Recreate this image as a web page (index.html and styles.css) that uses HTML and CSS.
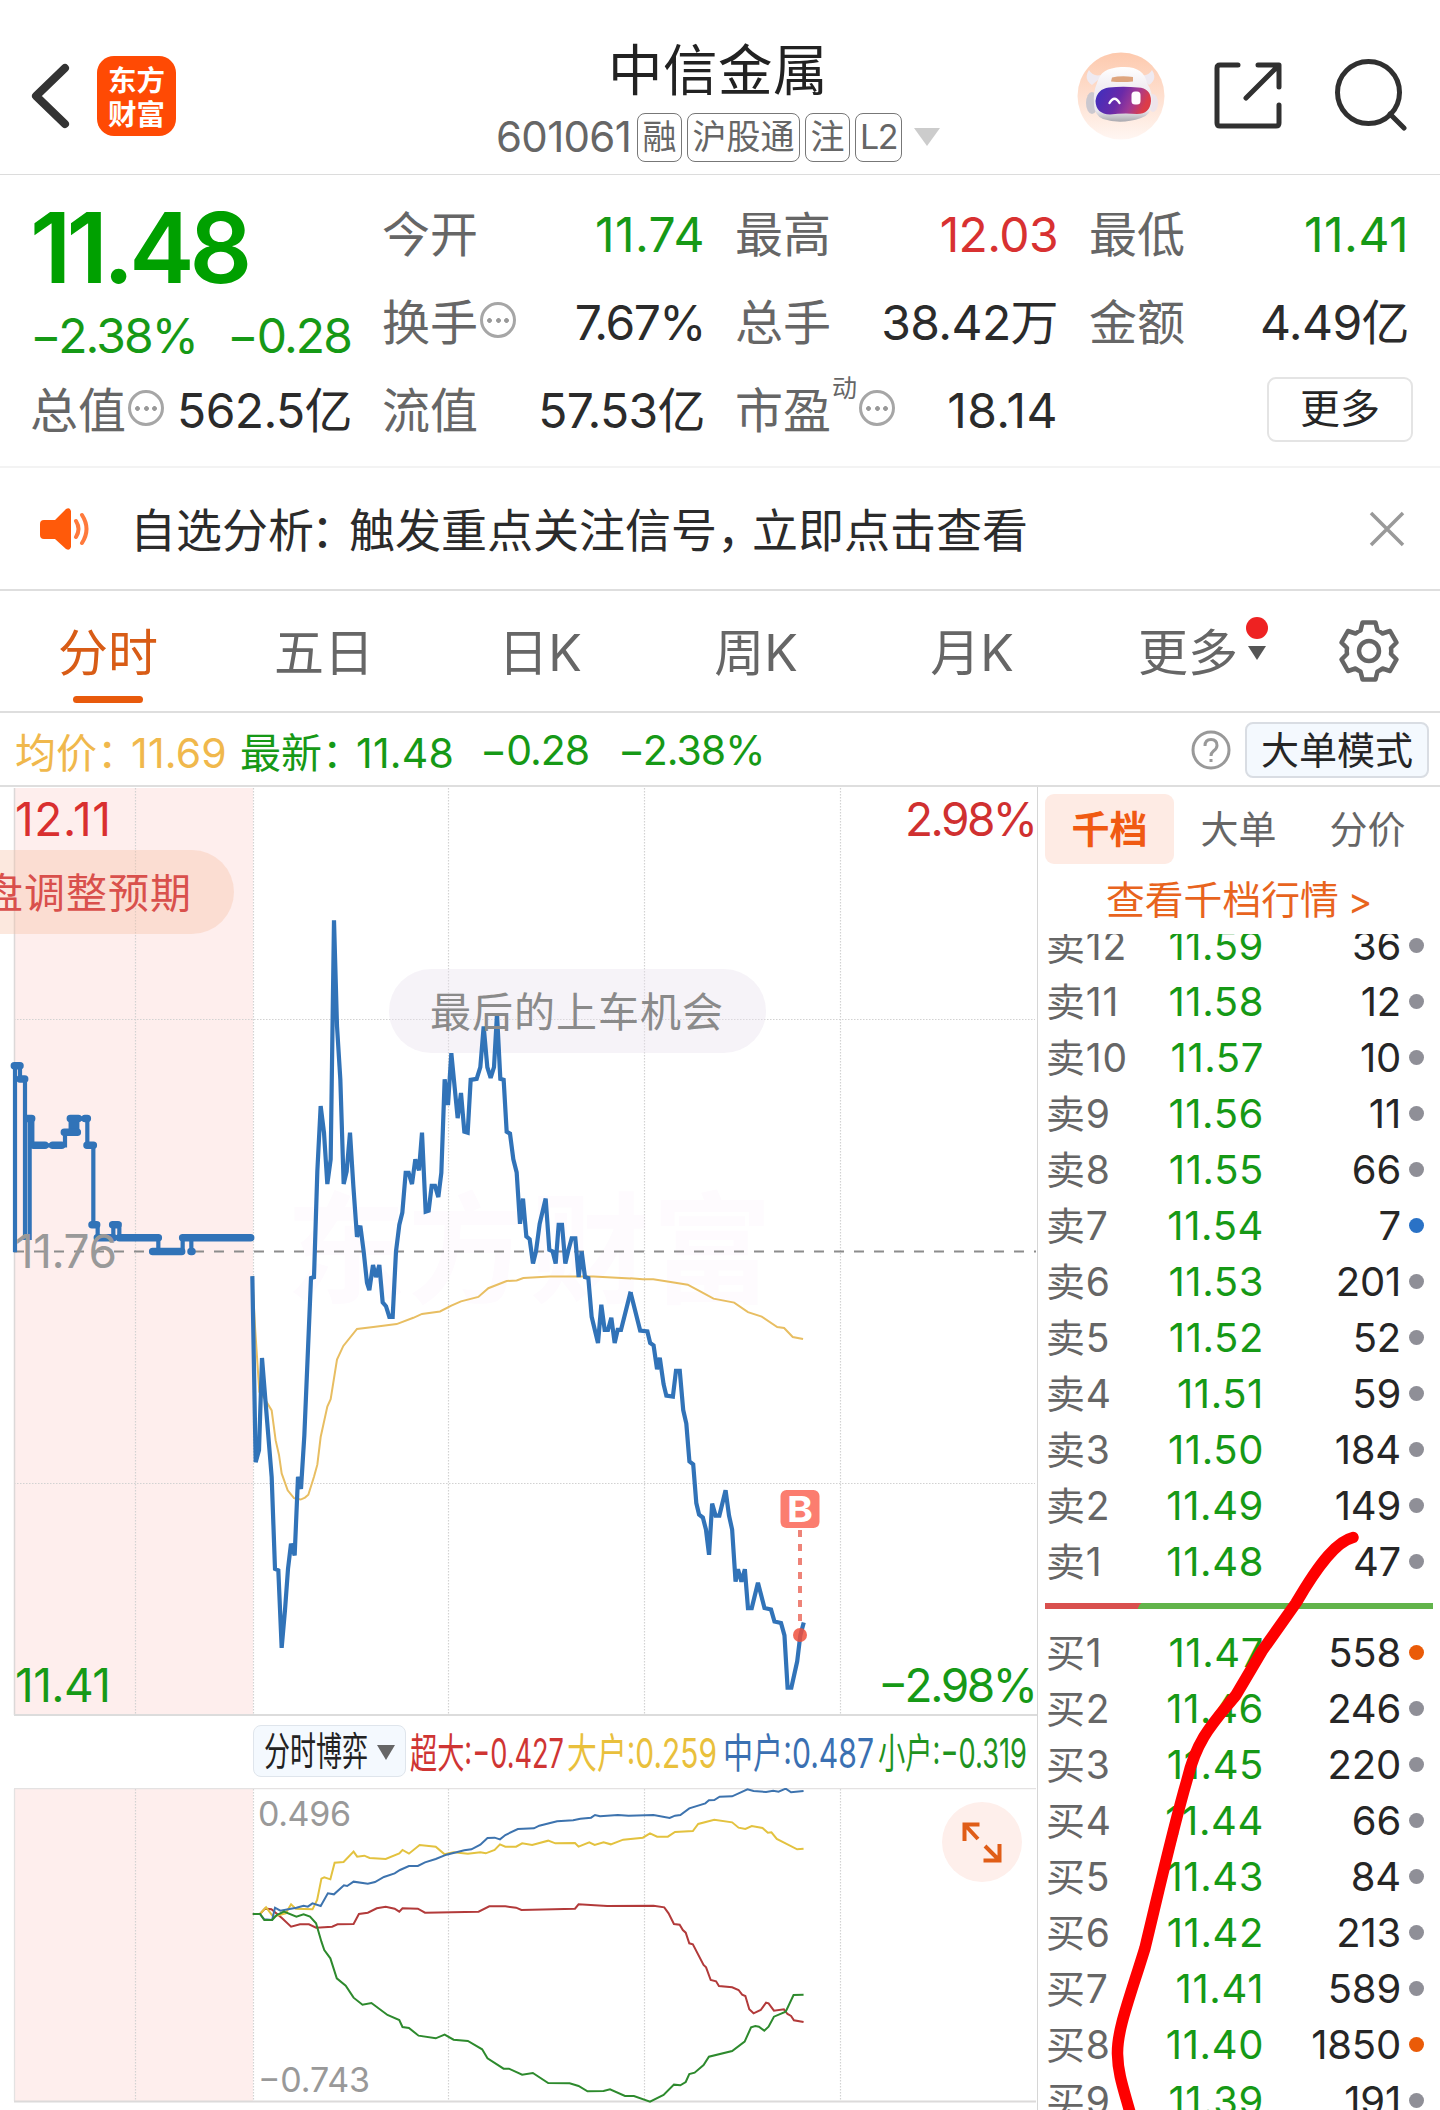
FILE: index.html
```html
<!DOCTYPE html>
<html lang="zh-CN">
<head>
<meta charset="utf-8">
<title>中信金属 601061</title>
<link rel="stylesheet" href="styles.css">
</head>
<body>
<div class="app">

<header class="topbar">
  <div class="topbar-left">
    <svg class="back" width="40" height="68" viewBox="0 0 40 68"><path d="M35 6 6 34 35 62" /></svg>
    <div class="logo"><span>东方</span><span>财富</span></div>
  </div>
  <div class="title">
    <h1>中信金属</h1>
    <div class="code-row">
      <span class="code">601061</span>
      <span class="tag">融</span><span class="tag">沪股通</span><span class="tag">注</span><span class="tag l2">L2</span>
      <svg class="drop" width="26" height="18" viewBox="0 0 26 18"><path d="M0 0h26L13 18z"/></svg>
    </div>
  </div>
  <div class="topbar-right">
    <svg width="88" height="88" viewBox="0 0 88 88">
      <defs>
        <linearGradient id="halo" x1="0" y1="0" x2="0" y2="1"><stop offset="0" stop-color="#fdc9ad"/><stop offset="1" stop-color="#fff6f2"/></linearGradient>
        <linearGradient id="visor" x1="0" y1="0" x2="1" y2="0.25"><stop offset="0" stop-color="#3b2fc0"/><stop offset=".5" stop-color="#6a2aa8"/><stop offset=".75" stop-color="#a03a96"/><stop offset="1" stop-color="#dc3c48"/></linearGradient>
        <linearGradient id="shell" x1="0" y1="0" x2="0" y2="1"><stop offset="0" stop-color="#fff"/><stop offset=".35" stop-color="#f2eef3"/><stop offset=".8" stop-color="#eae8ee"/><stop offset="1" stop-color="#a9a8ae"/></linearGradient>
      </defs>
      <circle cx="44" cy="44" r="43.500" fill="url(#halo)"/>
      <path d="M12 18q-6 9 3 15l6-5 3-5q-8 2-12-5zM75 18q6 9-3 15l-6-5-3-5q8 2 12-5z" fill="#efeaf1"/>
      <ellipse cx="15" cy="51" rx="6" ry="11" fill="#cbc8cf"/><ellipse cx="76" cy="51" rx="5" ry="9" fill="#eee4ea"/>
      <path d="M44 15C60 14 68 20 70 31Q76 40 75 52 74 63 64 66 44 73 26 67 17 63 17 52 16 40 20 31C23 20 30 16 44 15z" fill="url(#shell)"/>
      <path d="M35 25.500Q44 23.500 56 25v4.500q-11 1-22 0z" fill="#dea57e"/>
      <path d="M32 35.500Q46 34 61 35.500 74 36 74 49 73 62 60 62 46 61 33 62.500 19 62 18.500 49 20 37 32 35.500z" fill="url(#visor)"/>
      <path d="M32.500 51q5-8.500 10 0" fill="none" stroke="#fff" stroke-width="2.400" stroke-linecap="round"/>
      <rect x="54.500" y="39.500" width="9" height="13" rx="3.500" fill="#fff"/>
    </svg>
    <svg class="line-icon" width="72" height="72" viewBox="0 0 72 72"><path d="M26 5H8Q5 5 5 8V63Q5 66 8 66H64Q67 66 67 63V45M46 5H67V27M65 7 34 38"/></svg>
    <svg class="line-icon" width="76" height="76" viewBox="0 0 76 76"><circle cx="37.500" cy="34.500" r="31"/><path d="M59 56 73 70"/></svg>
  </div>
</header>

<section class="quote">
  <div class="q-main">
    <div class="price">11.48</div>
    <div class="change"><span>−2.38%</span><span>−0.28</span></div>
  </div>
  <div class="cell a"><label>今开</label><b class="g w">11.74</b></div>
  <div class="cell b"><label>最高</label><b class="r">12.03</b></div>
  <div class="cell c"><label>最低</label><b class="g w">11.41</b></div>
  <div class="cell a"><label>换手</label><i class="info"></i><b class="n">7.67%</b></div>
  <div class="cell b"><label>总手</label><b>38.42万</b></div>
  <div class="cell c"><label>金额</label><b>4.49亿</b></div>
  <div class="cell m"><label>总值</label><i class="info"></i><b>562.5亿</b></div>
  <div class="cell a"><label>流值</label><b>57.53亿</b></div>
  <div class="cell b"><label>市盈</label><sup>动</sup><i class="info"></i><b class="w">18.14</b></div>
  <div class="cell c end"><button class="more">更多</button></div>
</section>

<section class="notice">
  <svg width="52" height="44" viewBox="0 0 52 44"><path d="M4 13h11L26 2q4-2 5 2v36q-1 4-5 2L15 32H4q-4 0-4-4V17q0-4 4-4z" fill="#ff5a0a"/><path d="M36 14q5 8 0 16M42 8q9 14 0 28" fill="none" stroke="#ff7a3c" stroke-width="4" stroke-linecap="round"/></svg>
  <p>自选分析<span class="punct colon">：</span>触发重点关注信号<span class="punct">，</span>立即点击查看</p>
  <svg class="close" width="36" height="36" viewBox="0 0 36 36"><path d="M2 2 34 34M34 2 2 34"/></svg>
</section>

<nav class="tabs">
  <a class="on">分时</a><a>五日</a><a>日K</a><a>周K</a><a>月K</a>
  <a class="tab-more">更多<span class="badge"><i></i><svg width="18" height="14" viewBox="0 0 18 14"><path d="M0 0h18L9 14z"/></svg></span></a>
  <svg class="gear" width="62" height="62" viewBox="-31 -31 62 62"><path d="M-6.500 -28.500H6.500L8.500 -20.500Q11 -19.500 13.500 -17.500L21 -20 27.500 -8.500 22 -3Q22.500 0 22 3L27.500 8.500 21 20 13.500 17.500Q11 19.500 8.500 20.500L6.500 28.500H-6.500L-8.500 20.500Q-11 19.500 -13.500 17.500L-21 20 -27.500 8.500 -22 3Q-22.500 0 -22 -3L-27.500 -8.500 -21 -20 -13.500 -17.500Q-11 -19.500 -8.500 -20.500Z"/><circle r="10"/></svg>
</nav>

<section class="avg">
  <span class="y avg-item">均价：<em>11.69</em></span>
  <span class="g avg-item">最新：<em>11.48</em></span>
  <span class="g n1">−0.28</span><span class="g n2">−2.38%</span>
  <svg class="help" width="40" height="40" viewBox="0 0 40 40"><circle cx="20" cy="20" r="18"/><path d="M14 16q0-6.500 6-6.500t6 6q0 3-3.500 5.500Q20 23 20 26M20 29v3"/></svg>
  <button class="mode">大单模式</button>
</section>

<main class="body">
<div class="charts">
  <svg class="chart" width="1037" height="929" viewBox="0 787 1037 929">
    <rect x="14" y="788" width="239" height="927" fill="#feeeed"/>
    <text x="286" y="1294" class="mark" textLength="486">东方财富</text>
    <g class="grid"><path d="M135.500 788V1715M253.500 788V1715M448.500 788V1715M644.500 788V1715M840.500 788V1715M14 1019.500H1035M14 1483.500H1035"/></g>
    <path d="M14.500 788V1715" stroke="#dcd8d8" stroke-width="1.500"/>
    <path d="M14 1715H1037" stroke="#dcdcdc" stroke-width="2"/>
    <rect x="-60" y="850" width="294" height="84" rx="42" fill="#f8bfa4" fill-opacity=".36"/>
    <rect x="389" y="969" width="377" height="84" rx="42" fill="#e8e0ee" fill-opacity=".4"/>
    <path d="M14 1251.500H1036" stroke="#8c8c8c" stroke-width="1.800" stroke-dasharray="10 10"/>
    <g transform="translate(240 900) scale(.33333 .48469)" class="avg-line">
      <path d="M37 776 45 880 58 1015 75 1030 95 1053 107 1115 117 1145 125 1183 143 1218 162 1234 182 1237 195 1233 205 1227 222 1190 232 1165 242 1108 262 1045 272 1030 291 948 310 920 351 885 400 881 470 875 520 862 546 854 600 849 634 837 663 828 715 819 745 801 800 786 830 785 850 780 930 777 1060 777 1173 781"/>
    </g>
    <g transform="translate(500 940) scale(.34439 .49745)" class="avg-line">
      <path d="M379 680 415 682 445 682 500 688 545 693 580 706 620 721 680 729 720 748 760 757 805 778 825 780 850 798 880 802"/>
    </g>
    <g transform="translate(240 900) scale(.33333 .48469)" class="price-line">
      <path d="M37 776 47 1160 57 1135 66 945 76 1030 95 1190 105 1380 115 1383 125 1543 135 1465 144 1380 153 1328 164 1352 174 1190 183 1215 193 1105 213 780 222 778 232 560 242 425 252 480 262 586 272 535 282 42 291 260 301 370 311 586 320 560 330 480 340 590 351 695 361 672 371 725 381 790 388 805 399 753 408 778 418 753 428 830 438 838 448 860 458 860 468 725 478 670 487 645 497 563 506 563 516 586 526 535 537 558 546 480 557 643 566 641 575 590 585 590 595 613 604 563 614 370 624 423 634 316 653 450 663 398 673 478 683 480 692 371 710 369 721 345 731 261 742 345 752 367 762 345 771 235 781 369 791 371 800 478 810 482 820 535 830 562 840 668 849 616 859 694 869 700 879 750 888 725 899 668 917 616 928 722 938 725 947 750 956 670 966 670 976 750 985 723 995 698 1006 698 1016 778 1025 725 1035 778 1045 780 1055 860 1074 914 1084 835 1094 887 1104 887 1114 862 1124 914 1133 887 1143 887 1172 808"/>
    </g>
    <g transform="translate(500 940) scale(.34439 .49745)" class="price-line">
      <path d="M379 708 407 785 428 787 436 810 446 815 456 863 464 840 475 893 483 916 502 918 511 866 522 866 532 945 541 972 550 1048 561 1054 570 1132 578 1155 589 1161 598 1185 607 1236 616 1133 626 1157 637 1157 655 1106 665 1157 674 1185 684 1290 691 1265 701 1290 711 1265 720 1343 731 1343 749 1292 768 1343 787 1346 797 1370 816 1373 826 1398 835 1503 846 1503 863 1450 872 1398 882 1372"/>
    </g>
    <g transform="translate(0 780) scale(.33333 .35714)" class="price-line">
      <path d="M45 1322V800H60V837H75V1282H89V948H97V1023H195V986H212V948H220V986H232V948H262V1023H280V1245H293V1282H340V1245H358V1282H475V1320H548V1282H574V1320 1282H752"/>
      <path class="auction" d="M43 800H60M60 837H74M82 948H95M100 1023H135M158 1023H185M193 986H232M211 948H235M255 948H262M261 1023H280M276 1245H290M292 1282H340M338 1245H354M358 1282H475M458 1320H545M548 1282H752M573 1320H576"/>
    </g>
    <path d="M800 1530V1624" stroke="#ee8378" stroke-width="4" stroke-dasharray="7 7"/>
    <circle cx="800" cy="1635" r="7" fill="#f0503c" fill-opacity=".85"/>
    <rect x="780.500" y="1490" width="39" height="38" rx="6" fill="#fb7d6f"/>
    <text x="787" y="1522" class="buy" textLength="26" lengthAdjust="spacingAndGlyphs">B</text>
    <g class="axis">
      <text x="15" y="836" fill="#d92f2f" textLength="96" >12.11</text>
      <text x="905" y="836" fill="#d03030" textLength="133">2.98%</text>
      <text x="15" y="1268" fill="#999" textLength="102">11.76</text>
      <text x="15" y="1702" fill="#169916" textLength="96">11.41</text>
      <text x="878" y="1702" fill="#169916" textLength="160">−2.98%</text>
    </g>
    <text x="-18" y="908" class="pill-text" fill="#d9504c" textLength="209">盘调整预期</text>
    <text x="430" y="1027" class="pill-text" fill="#8a8a8a" textLength="293">最后的上车机会</text>
  </svg>

  <div class="legend">
    <button class="metric"><svg width="150" height="50" viewBox="0 0 150 50"><text x="10" y="39" textLength="104" lengthAdjust="spacingAndGlyphs">分时博弈</text><path d="M123 19h18l-9 15z" fill="#666"/></svg></button>
    <svg class="legend-values" width="622" height="52" viewBox="410 1725 622 52">
      <text x="410" y="1768" fill="#cf3533" textLength="154" lengthAdjust="spacingAndGlyphs">超大:−0.427</text>
      <text x="567" y="1768" fill="#e9c03c" textLength="150" lengthAdjust="spacingAndGlyphs">大户:0.259</text>
      <text x="723" y="1768" fill="#3a70b2" textLength="151" lengthAdjust="spacingAndGlyphs">中户:0.487</text>
      <text x="878" y="1768" fill="#1f931f" textLength="149" lengthAdjust="spacingAndGlyphs">小户:−0.319</text>
    </svg>
  </div>

  <svg class="chart" width="1037" height="323" viewBox="0 1788 1037 323">
    <rect x="14" y="1789" width="239" height="312" fill="#feeeed"/>
    <g class="grid"><path d="M135.500 1789V2101M253.500 1789V2101M448.500 1789V2101M644.500 1789V2101M840.500 1789V2101"/></g>
    <path d="M14 1788.500H1036M14.500 1789V2101" stroke="#e4e2e2" stroke-width="1.300"/>
    <path d="M14 2101.500H1036" stroke="#dcdada" stroke-width="1.800"/>
    <g transform="translate(0 1640) scale(.35714 .33333)" class="flow">
      <path stroke="#b23a3a" d="M708 822 728 822 742 806 760 808 790 835 815 860 840 853 865 853 885 863 930 860 945 853 990 852 1005 822 1030 818 1055 805 1080 800 1105 806 1118 815 1127 805 1170 806 1190 818 1340 815 1370 799 1415 799 1445 803 1460 810 1610 806 1620 793 1700 798 1830 797 1860 802 1872 820 1887 852 1903 854 1912 870 1920 878 1930 910 1940 913 1970 975 1977 982 1990 1020 2005 1024 2013 1038 2050 1042 2068 1050 2078 1064 2087 1068 2098 1108 2110 1120 2130 1110 2145 1088 2152 1090 2167 1112 2195 1108 2205 1122 2215 1128 2223 1141 2250 1146"/>
      <path stroke="#e3c23f" d="M708 822 728 822 745 802 765 830 800 820 815 793 828 806 875 808 888 780 900 716 908 712 925 718 937 668 962 666 990 635 1000 650 1020 647 1035 654 1080 657 1118 640 1127 630 1145 641 1175 615 1220 620 1245 643 1270 637 1310 641 1345 637 1360 640 1385 630 1400 613 1415 620 1445 620 1462 610 1490 615 1535 602 1555 610 1610 609 1620 620 1650 607 1665 615 1690 607 1710 613 1745 599 1800 593 1820 580 1840 590 1870 590 1890 576 1940 573 1955 552 2000 539 2050 547 2068 563 2087 567 2105 558 2135 564 2150 578 2160 577 2175 597 2205 613 2232 628 2250 626"/>
      <path stroke="#3d73ae" d="M708 822 728 822 740 838 762 840 770 803 785 812 830 803 850 797 862 800 875 790 898 798 918 760 935 763 963 736 972 738 990 725 1030 731 1050 726 1075 711 1105 700 1120 690 1145 678 1170 678 1190 667 1220 657 1250 644 1300 631 1320 628 1345 614 1365 594 1385 593 1400 598 1415 585 1450 567 1495 565 1510 557 1560 544 1605 541 1625 536 1655 533 1666 525 1680 529 1730 525 1760 527 1830 525 1875 534 1890 527 1905 525 1930 505 1975 490 1985 481 2000 480 2015 470 2050 469 2093 448 2110 453 2145 456 2165 452 2180 455 2200 446 2215 457 2250 453"/>
      <path stroke="#2d8a2d" d="M708 822 728 822 740 840 762 840 775 825 795 815 830 830 850 823 868 830 885 850 900 905 908 930 925 955 943 1015 968 1037 990 1073 1015 1094 1040 1089 1085 1125 1118 1140 1127 1161 1145 1164 1172 1187 1220 1195 1245 1184 1270 1199 1310 1203 1350 1228 1365 1255 1410 1286 1425 1286 1462 1304 1492 1299 1535 1329 1595 1330 1620 1338 1645 1354 1690 1353 1708 1348 1750 1368 1775 1368 1820 1385 1858 1365 1887 1334 1905 1336 1920 1326 1930 1302 1945 1298 1970 1275 1985 1250 2050 1233 2085 1205 2103 1162 2115 1158 2125 1160 2140 1172 2152 1160 2167 1130 2200 1115 2222 1065 2250 1064"/>
    </g>
    <g class="sub-axis"><text x="258" y="1826" textLength="93">0.496</text><text x="258" y="2092" textLength="112">−0.743</text></g>
    <circle cx="982" cy="1842" r="40" fill="#feefeb"/>
    <path d="M964.500 1841V1824.500H979.500M965 1825 978 1839M999.500 1844V1860.500H983.500M999 1860 985 1846" fill="none" stroke="#e05d17" stroke-width="4"/>
  </svg>
</div>

<aside class="book">
  <div class="book-tabs"><a class="on">千档</a><a>大单</a><a>分价</a></div>
  <div class="book-link">查看千档行情<span>&gt;</span></div>
  <div class="asks">
    <div class="row"><span>卖12</span><b>11.59</b><em>36</em><i></i></div>
    <div class="row"><span>卖11</span><b>11.58</b><em>12</em><i></i></div>
    <div class="row"><span>卖10</span><b>11.57</b><em>10</em><i></i></div>
    <div class="row"><span>卖9</span><b>11.56</b><em>11</em><i></i></div>
    <div class="row"><span>卖8</span><b>11.55</b><em>66</em><i></i></div>
    <div class="row"><span>卖7</span><b>11.54</b><em>7</em><i class="blue"></i></div>
    <div class="row"><span>卖6</span><b>11.53</b><em>201</em><i></i></div>
    <div class="row"><span>卖5</span><b>11.52</b><em>52</em><i></i></div>
    <div class="row"><span>卖4</span><b>11.51</b><em>59</em><i></i></div>
    <div class="row"><span>卖3</span><b>11.50</b><em>184</em><i></i></div>
    <div class="row"><span>卖2</span><b>11.49</b><em>149</em><i></i></div>
    <div class="row"><span>卖1</span><b>11.48</b><em>47</em><i></i></div>
  </div>
  <div class="ratio"></div>
  <div class="bids">
    <div class="row"><span>买1</span><b>11.47</b><em>558</em><i class="orange"></i></div>
    <div class="row"><span>买2</span><b>11.46</b><em>246</em><i></i></div>
    <div class="row"><span>买3</span><b>11.45</b><em>220</em><i></i></div>
    <div class="row"><span>买4</span><b>11.44</b><em>66</em><i></i></div>
    <div class="row"><span>买5</span><b>11.43</b><em>84</em><i></i></div>
    <div class="row"><span>买6</span><b>11.42</b><em>213</em><i></i></div>
    <div class="row"><span>买7</span><b>11.41</b><em>589</em><i></i></div>
    <div class="row"><span>买8</span><b>11.40</b><em>1850</em><i class="orange"></i></div>
    <div class="row"><span>买9</span><b>11.39</b><em>191</em><i></i></div>
  </div>
  <svg class="scribble" width="402" height="600" viewBox="1038 1510 402 600"><path d="M1354 1537.500C1339 1541 1322 1560 1297 1603L1263 1651 1237 1695C1215 1722 1198 1738 1188 1780 1174 1828 1160 1890 1146 1948 1130 2000 1118 2030 1118.500 2054 1119 2075 1125 2090 1132 2116"/></svg>
</aside>
</main>
</div>
</body>
</html>
```
FILE: styles.css
```css
* { box-sizing: border-box; }
body { margin: 0; background: #fff; color: #2b2b2b; font-family: Inter, "Noto Sans CJK SC", sans-serif; }
.app { width: 1440px; height: 2110px; overflow: hidden; }
svg { display: block; flex: none; }
b, i, em { font-weight: 400; font-style: normal; }
button { font-family: inherit; padding: 0; color: #262626; }
.g { color: #169916; }
.r { color: #d83131; }
.y { color: #f0b84c; }

.topbar { height: 175px; display: grid; grid-template-columns: 370px 696px 1fr; border-bottom: 1.500px solid #dcdcdc; }
.topbar-left { display: flex; align-items: center; gap: 27px; padding: 18px 0 0 30px; }
.back path { fill: none; stroke: #333; stroke-width: 8; stroke-linecap: round; stroke-linejoin: round; }
.logo { width: 79px; height: 80px; border-radius: 17px; background: #ff4a04; color: #fff; font: 700 28.500px/34px "Noto Sans CJK SC", sans-serif; display: flex; flex-direction: column; align-items: center; justify-content: center; }
.title { display: flex; flex-direction: column; align-items: center; padding-top: 37px; }
.title h1 { margin: 0; font-size: 54.500px; line-height: 66px; font-weight: 400; letter-spacing: .5px; color: #222; }
.code-row { display: flex; align-items: center; gap: 5px; margin-top: 9px; }
.code { font-size: 42px; line-height: 50px; letter-spacing: -.700px; color: #666; margin-right: 1px; }
.tag { height: 49px; border: 1.500px solid #777; border-radius: 8px; padding: 0 4.500px; font-size: 34px; line-height: 46px; color: #666; }
.tag.l2 { letter-spacing: -1.500px; padding: 0 4px; }
.drop { margin-left: 7px; fill: #ccc; }
.topbar-right { display: flex; align-items: center; padding: 18px 0 0 11px; gap: 47px; }
.line-icon { fill: none; stroke: #303030; stroke-width: 5; stroke-linecap: round; stroke-linejoin: round; }

.quote { height: 293px; padding: 16px 0 0 30px; display: grid; grid-template-columns: 352px 353px 354px 351px; grid-template-rows: 88px 88px 88px; border-bottom: 2px solid #f3f3f3; }
.q-main { grid-row: 1 / 3; color: #00a000; }
.price { font-size: 98px; line-height: 98px; font-weight: 600; letter-spacing: -5px; margin-top: 8px; height: 112px; }
.change { display: flex; justify-content: space-between; width: 321px; font-size: 48px; line-height: 50px; letter-spacing: -1.900px; color: #169916; }
.cell { display: flex; align-items: center; font-size: 48px; height: 88px; }
.cell label { color: #666; line-height: 60px; }
.cell b { margin-left: auto; letter-spacing: -.600px; line-height: 60px; white-space: nowrap; }
.cell b.w { letter-spacing: .500px; }
.cell b.n { letter-spacing: -1.500px; }
.cell.a, .cell.b, .cell.c, .cell.m { padding-right: 30px; }
.cell.b b, .cell.c b { margin-right: 1px; }
.cell.end { justify-content: flex-end; padding-right: 27px; }
.cell.end .more { margin-top: -4px; }
.cell sup { font-size: 25px; line-height: 30px; color: #666; align-self: flex-start; margin: 6px 0 0 1px; }
.info { flex: none; width: 36px; height: 36px; margin: -6px 0 0 2px; border: 3px solid #a6a6a6; border-radius: 50%; background: radial-gradient(circle, #999 2px, transparent 2.800px) center / 9px 9px no-repeat, radial-gradient(circle, #999 2px, transparent 2.800px) 2px center / 9px 9px no-repeat, radial-gradient(circle, #999 2px, transparent 2.800px) 19px center / 9px 9px no-repeat; }
.more { width: 146px; height: 65px; border: 2px solid #e4e4e4; border-radius: 9px; background: #fff; font-size: 40px; line-height: 58px; }

.notice { height: 123px; padding: 0 35px 0 40px; display: flex; align-items: center; border-bottom: 2px solid #dedede; }
.notice p { margin: 2px auto 0 38px; font-size: 46px; line-height: 60px; color: #2b2b2b; }
.punct { letter-spacing: -11px; }
.punct.colon { position: relative; left: -3px; }
.close path { fill: none; stroke: #999; stroke-width: 3.500; }

.tabs { height: 122px; display: flex; align-items: center; border-bottom: 2px solid #dedede; }
.tabs a { width: 216px; height: 120px; font-size: 50px; line-height: 125px; text-align: center; color: #666; }
.tabs a.on { color: #d85c16; display: flex; flex-direction: column; align-items: center; }
.tabs a.on::after { content: ""; width: 70px; height: 7px; border-radius: 4px; background: #e85a0c; margin-top: -20px; flex: none; }
.tab-more { position: relative; }
.badge { position: absolute; left: 166px; top: 26px; line-height: 0; }
.badge i { display: block; width: 22px; height: 22px; border-radius: 50%; background: #ee2222; }
.badge svg { margin: 7px 0 0 2px; fill: #555; }
.gear { margin-left: 42px; fill: none; stroke: #666; stroke-width: 4.500; stroke-linejoin: round; }

.avg { height: 74px; display: flex; align-items: center; padding: 1px 11px 0 15px; font-size: 41px; border-bottom: 2px solid #dedede; white-space: nowrap; }
.avg-item { width: 225px; }
.avg em { letter-spacing: .200px; margin-left: -7px; }
.n1, .n2 { letter-spacing: -1px; }
.n1 { width: 138px; margin-left: 15px; }
.help { margin-left: auto; fill: none; stroke: #999; stroke-width: 3; }
.mode { width: 184px; height: 56px; margin-left: 14px; border: 2px solid #d9dde3; border-radius: 8px; background: #f4f9fe; font-size: 38px; line-height: 50px; }

.body { display: flex; height: 1323px; }
.charts { width: 1037px; flex: none; }
.chart { overflow: hidden; }
.grid path { fill: none; stroke: #d2d2d2; stroke-width: 1.200; stroke-dasharray: 1.500 1.500; }
.mark { font: 700 120px "Noto Sans CJK SC", sans-serif; fill: #fefbfe; }
.price-line path, .avg-line path, .flow path { fill: none; vector-effect: non-scaling-stroke; stroke-linejoin: miter; stroke-miterlimit: 2; }
.price-line path { stroke: #3173b8; stroke-width: 4.200; }
.price-line path.auction { stroke-width: 7.500; stroke-linecap: round; }
.avg-line path { stroke: #e8be62; stroke-width: 2; }
.flow path { stroke-width: 2; }
.axis text { font-size: 46px; }
.sub-axis text { font-size: 34px; fill: #999; }
.pill-text { font-size: 41px; }
.buy { font-size: 36px; font-weight: 700; fill: #fff; }
.legend { height: 72px; display: flex; align-items: center; padding: 0 0 2px 253px; }
.metric { width: 153px; height: 52px; border: 1.500px solid #dfe5ec; border-radius: 8px; background: #f4f9fe; overflow: hidden; }
.metric text { font-size: 39px; fill: #222; }
.legend-values { margin-left: 4px; }
.legend-values text { font-size: 41px; }

.book { position: relative; width: 403px; border-left: 1px solid #d6d6d6; padding: 7px 7px 0; }
.book-tabs { display: flex; height: 70px; }
.book-tabs a { width: 129px; text-align: center; font-size: 38px; line-height: 70px; color: #666; }
.book-tabs a.on { background: #feebe4; color: #f05a12; font-weight: 700; border-radius: 9px; }
.book-link { height: 70px; font-size: 38.800px; line-height: 71px; color: #e8641e; padding-left: 61px; white-space: nowrap; }
.book-link span { margin-left: 9px; font-size: 37px; }
.asks { height: 669px; overflow: hidden; }
.asks .row:first-child { margin-top: -16px; }
.row { flex: none; height: 56px; display: grid; grid-template-columns: 95px 123px 137px 1fr; align-items: center; padding-left: 1px; font-size: 40px; line-height: 56px; white-space: nowrap; }
.row span { color: #666; font-size: 39px; letter-spacing: .800px; }
.row b { color: #169916; text-align: right; letter-spacing: .600px; }
.row em { color: #262626; text-align: right; letter-spacing: -.200px; }
.row i { width: 15px; height: 15px; border-radius: 50%; background: #8f8f97; margin: -1px 0 0 8px; }
.row i.blue { background: #2a72c6; }
.row i.orange { background: #ea5b08; }
.ratio { height: 6px; width: 388px; background: linear-gradient(120deg, #d9504e 24.500%, #62b44b 24.500%); }
.bids { margin-top: 16px; }
.scribble { position: absolute; left: -1px; bottom: 0; pointer-events: none; }
.scribble path { fill: none; stroke: #fe0000; stroke-width: 11.500; stroke-linecap: round; stroke-linejoin: round; }
```
